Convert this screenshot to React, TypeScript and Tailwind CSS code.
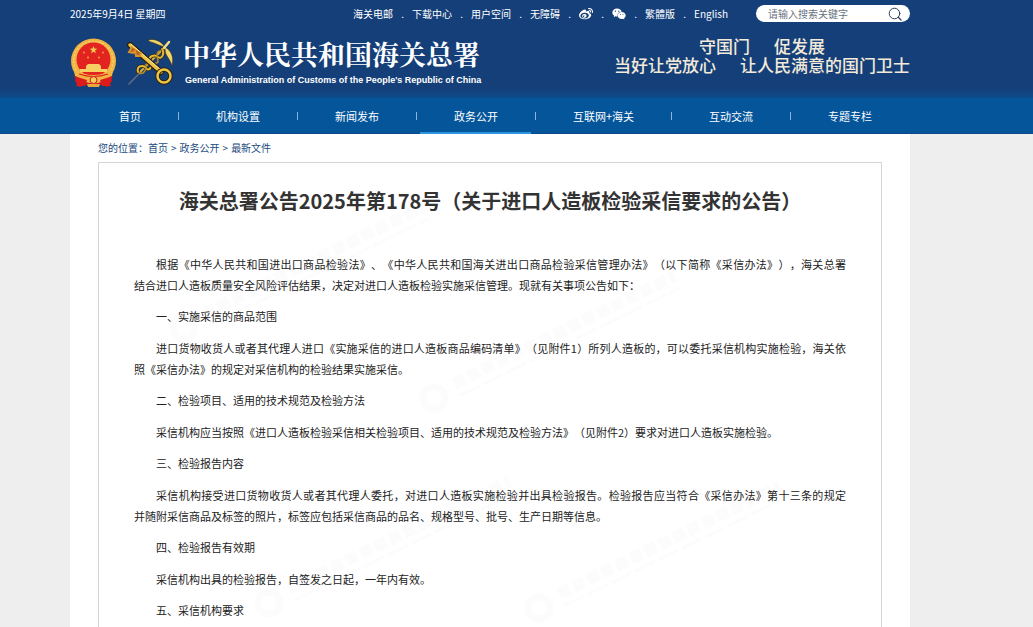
import { Fragment, type ReactNode } from 'react';
import { FaWeibo, FaWeixin } from 'react-icons/fa';
import { clsx } from 'clsx';

const TOP_LINKS: { id: string; label: string; icon?: ReactNode }[] = [
  { id: 'mail', label: '海关电邮' },
  { id: 'download', label: '下载中心' },
  { id: 'user', label: '用户空间' },
  { id: 'a11y', label: '无障碍' },
  { id: 'weibo', label: '微博', icon: <FaWeibo size={14} /> },
  { id: 'weixin', label: '微信', icon: <FaWeixin size={14} /> },
  { id: 'tc', label: '繁體版' },
  { id: 'en', label: 'English' },
];

const NAV_ITEMS = ['首页', '机构设置', '新闻发布', '政务公开', '互联网+海关', '互动交流', '专题专栏'];
const ACTIVE_NAV = '政务公开';

const CRUMBS = ['首页', '政务公开', '最新文件'];

// \u2060 keeps the two characters around it on the same line
const INTRO =
  '根据《中华人民共和国进出口商品检验法》、《中华人民共和国海关进出口商品检验采信管理办法》（以下简称《采信办法》），海关总署结\u2060合进口人造板质量安全风险评估结果，决定对进口人造板检验实施采信管理。现就有关事项公告如下：';

const SECTIONS = [
  {
    title: '一、实施采信的商品范围',
    text: '进口货物收货人或者其代理人进口《实施采信的进口人造板商品编码清单》（见附件1）所列人造板的，可以委托采信机构实施检验，海关依照\u2060《采信办法》的规定对采信机构的检验结果实施采信。',
  },
  {
    title: '二、检验项目、适用的技术规范及检验方法',
    text: '采信机构应当按照《进口人造板检验采信相关检验项目、适用的技术规范及检验方法》（见附件2）要求对进口人造板实施检验。',
  },
  {
    title: '三、检验报告内容',
    text: '采信机构接受进口货物收货人或者其代理人委托，对进口人造板实施检验并出具检验报告。检验报告应当符合《采信办法》第十三条的规定并\u2060随附采信商品及标签的照片，标签应包括采信商品的品名、规格型号、批号、生产日期等信息。',
  },
  {
    title: '四、检验报告有效期',
    text: '采信机构出具的检验报告，自签发之日起，一年内有效。',
  },
  { title: '五、采信机构要求', text: '' },
];

function NationalEmblem() {
  return (
    <svg viewBox="0 0 47 50" className="h-[50px] w-[47px] shrink-0" aria-hidden="true">
      <path d="M6 37 L23 33 L41 37 L42 43 L38 49 L28 46 L19 46 L9 49 L5 43 Z" fill="#d3191b" />
      <circle cx="23.500" cy="23" r="22.500" fill="#efb443" />
      <circle cx="23.500" cy="23" r="19.800" fill="none" stroke="#f8d271" strokeWidth="1.200" strokeDasharray="2 1.500" />
      <circle cx="23.500" cy="21.500" r="17" fill="#e2231f" />
      <path d="M23.500 8 l1 2.600 2.800 .2 -2.200 1.800 .7 2.700 -2.300 -1.500 -2.300 1.500 .7 -2.700 -2.200 -1.800 2.800 -.2z" fill="#f6c74f" />
      <g fill="#f0963c">
        <circle cx="14" cy="14.500" r="1.100" />
        <circle cx="33" cy="14.500" r="1.100" />
        <circle cx="18" cy="19.500" r="1.100" />
        <circle cx="29" cy="19.500" r="1.100" />
      </g>
      <path d="M16 28 L18 26 H29 L31 28 V31 H37 V34 H10 V31 H16 Z" fill="#f7cf63" />
      <path d="M4 32 Q23.500 42 43 32 L42 38 Q23.500 46 5 38 Z" fill="#f0b544" />
      <path d="M9 36 Q23.500 41 38 36" fill="none" stroke="#e2231f" strokeWidth="1.200" />
      <circle cx="23.500" cy="42" r="3.500" fill="#f6cc5b" stroke="#d3191b" strokeWidth="1" />
      <path d="M4 38 L17 42 L15 48 L6 48 L8 44 Z M43 38 L30 42 L32 48 L41 48 L39 44 Z" fill="#dc1c1c" />
      <path d="M17 46 H30 L29 49 H18 Z" fill="#e8a63b" />
    </svg>
  );
}

function CustomsBadge() {
  return (
    <svg viewBox="0 0 48 48" className="size-12 shrink-0" fill="none" strokeLinecap="round" aria-hidden="true">
      {/* caduceus */}
      <path d="M2 46 L38 9" stroke="#5f6f7d" strokeWidth="1.500" />
      <path d="M13 34 L38 9" stroke="#d9a92e" strokeWidth="2" />
      <path d="M11 34 C9 27 17 27 19 30 C22 35 27 26 23 23 C21 18 28 16 31 19 C35 22 38 15 35 11" stroke="#2c2710" strokeWidth="3.500" />
      <path d="M11 34 C9 27 17 27 19 30 C22 35 27 26 23 23 C21 18 28 16 31 19 C35 22 38 15 35 11" stroke="#e2b838" strokeWidth="2" />
      <path d="M12 35 C17 37 20 31 19 27 C20 22 28 28 31 24 C31 19 28 16 32 13" stroke="#b88c22" strokeWidth="1.500" />
      {/* wings */}
      <path d="M21 2 C27 0 34 3 38 9 C33 8 30 6 27 5 C25 4 22 4 21 2 Z" fill="#f2d56b" stroke="#3a300f" strokeWidth=".6" />
      <path d="M38 9 C45 13 47 20 45 28 C44 24 42 21 40 18 C38 15 38 12 38 9 Z" fill="#f2d56b" stroke="#3a300f" strokeWidth=".6" />
      <path d="M37 10 L42 4" stroke="#f5de85" strokeWidth="2.500" />
      {/* key */}
      <path d="M3 7 L34 34" stroke="#2c210b" strokeWidth="6" />
      <path d="M3 7 L34 34" stroke="#f0c244" strokeWidth="3.500" />
      <path d="M4 6 L34 32" stroke="#fbe9a2" strokeWidth="1" />
      <path d="M5 9 L2 14 L6 15 L8 13 L9 18 L13 18 L14 15" fill="#b5651d" stroke="#d8922e" strokeWidth="2" />
      <circle cx="37" cy="38" r="6.500" stroke="#2c210b" strokeWidth="4.500" />
      <circle cx="37" cy="38" r="6.500" stroke="#edc548" strokeWidth="2.500" />
    </svg>
  );
}

function TopBar() {
  return (
    <div className="flex h-[27px] items-center justify-between text-[10px] leading-4 text-white">
      <span>2025年9月4日 星期四</span>
      <div className="flex items-center gap-7">
        <nav className="flex items-center" aria-label="快捷链接">
          {TOP_LINKS.map((link, i) => (
            <Fragment key={link.id}>
              {i > 0 && <span className="w-[19px] text-center">.</span>}
              <a href="#" aria-label={link.icon ? link.label : undefined}>
                {link.icon ?? link.label}
              </a>
            </Fragment>
          ))}
        </nav>
        <form className="flex h-[17px] w-[154px] items-center rounded-full bg-white pr-2 pl-3">
          <input
            type="text"
            aria-label="搜索"
            placeholder="请输入搜索关键字"
            className="min-w-0 flex-1 bg-transparent text-[10px] leading-4 text-gray-700 outline-none placeholder:text-gray-500"
          />
          <button type="button" aria-label="搜索">
            <svg viewBox="0 0 14 14" className="size-3.5" fill="none" stroke="#2c3e57" strokeLinecap="round">
              <circle cx="6.500" cy="6.500" r="5.300" />
              <path d="M10.400 10.400 L13 13" strokeWidth="1.300" />
            </svg>
          </button>
        </form>
      </div>
    </div>
  );
}

function Banner() {
  return (
    <div className="flex h-[71px] items-start justify-between pt-[11px]">
      <a href="#" className="flex items-start text-white">
        <NationalEmblem />
        <span className="ml-2.5">
          <CustomsBadge />
        </span>
        <span className="ml-2 block">
          <span className="block text-[27px] leading-8 font-bold whitespace-nowrap [font-family:'Noto_Serif_CJK_SC','Noto_Sans_CJK_SC',serif]">
            中华人民共和国海关总署
          </span>
          <span className="ml-0.5 block pt-1 font-['Liberation_Sans',sans-serif] text-[9px] leading-3 font-bold whitespace-nowrap">
            General Administration of Customs of the People's Republic of China
          </span>
        </span>
      </a>
      <div className="text-center font-['Liberation_Sans','Noto_Sans_CJK_SC',sans-serif] text-[17px] leading-[19px] font-medium whitespace-nowrap text-[#f3ead9]">
        <p className="flex justify-center gap-6">
          <span>守国门</span>
          <span>促发展</span>
        </p>
        <p className="flex justify-center gap-6">
          <span>当好让党放心</span>
          <span>让人民满意的国门卫士</span>
        </p>
      </div>
    </div>
  );
}

function MainNav() {
  return (
    <nav className="border-b border-[#0d4a85] bg-[#04559a] pr-[123px] pl-[82px]" aria-label="主导航">
      <ul className="flex h-[35px] items-stretch text-[11px] text-white">
        {NAV_ITEMS.map((item, i) => (
          <li key={item} className="relative flex items-center">
            {i > 0 && <span className="h-2 w-px bg-[#8fb3d6]" />}
            <a href="#" className="px-[37px] leading-4 whitespace-nowrap">
              {item}
            </a>
            <span
              className={clsx(
                'absolute -bottom-px h-0.5',
                item === ACTIVE_NAV ? 'inset-x-1 bg-[#2b95e0]' : 'hidden'
              )}
            />
          </li>
        ))}
      </ul>
    </nav>
  );
}

// Faint diagonal marks behind the article
function Watermark() {
  const marks = [
    [285, 330],
    [535, 400],
    [370, 605],
    [640, 610],
  ];
  return (
    <svg className="pointer-events-none absolute inset-0 size-full" aria-hidden="true">
      {marks.map(([x, y]) => (
        <g key={`${x}-${y}`} transform={`translate(${x - 200} ${y - 165}) rotate(-26)`} stroke="#fcfcfc" fill="none">
          <circle r="11" strokeWidth="7" />
          <path d="M24 -4 H270" strokeWidth="12" strokeDasharray="12 4" />
          <path d="M24 9 H270" strokeWidth="3" strokeDasharray="22 4" />
        </g>
      ))}
    </svg>
  );
}

function Article() {
  return (
    <article className="relative mx-7 border border-[#d5d5d5] px-[35px] pt-6 pb-8">
      <Watermark />
      <div className="relative">
        <h1 className="text-center text-xl leading-7 font-bold text-[#333]">
          海关总署公告2025年第178号（关于进口人造板检验采信要求的公告）
        </h1>
        <div className="mt-[39px] text-justify text-[11px] leading-[21px] text-[#222] [text-spacing-trim:space-all]">
          <p className="indent-[22px]">{INTRO}</p>
          {SECTIONS.map(section => (
            <section key={section.title} className="mt-2.5">
              <h2 className="indent-[22px]">{section.title}</h2>
              {section.text && <p className="mt-[11px] indent-[22px]">{section.text}</p>}
            </section>
          ))}
        </div>
      </div>
    </article>
  );
}

export default function App() {
  return (
    <div className="h-screen overflow-hidden bg-[#eee] font-['Noto_Sans_CJK_SC',sans-serif]">
      <header>
        <div className="bg-linear-to-b from-[#153f79] from-90% to-[#0c4b8b] pr-[123px] pl-[70px]">
          <TopBar />
          <Banner />
        </div>
        <MainNav />
      </header>
      <main className="mr-[123px] ml-[70px] min-h-full bg-white">
        <div className="flex h-7 items-center px-7 text-[10px] leading-4 text-[#1b4b80]">
          <span>您的位置：</span>
          {CRUMBS.map((crumb, i) => (
            <Fragment key={crumb}>
              {i > 0 && <span className="px-[3px]">&gt;</span>}
              <a href="#">{crumb}</a>
            </Fragment>
          ))}
        </div>
        <Article />
      </main>
    </div>
  );
}
